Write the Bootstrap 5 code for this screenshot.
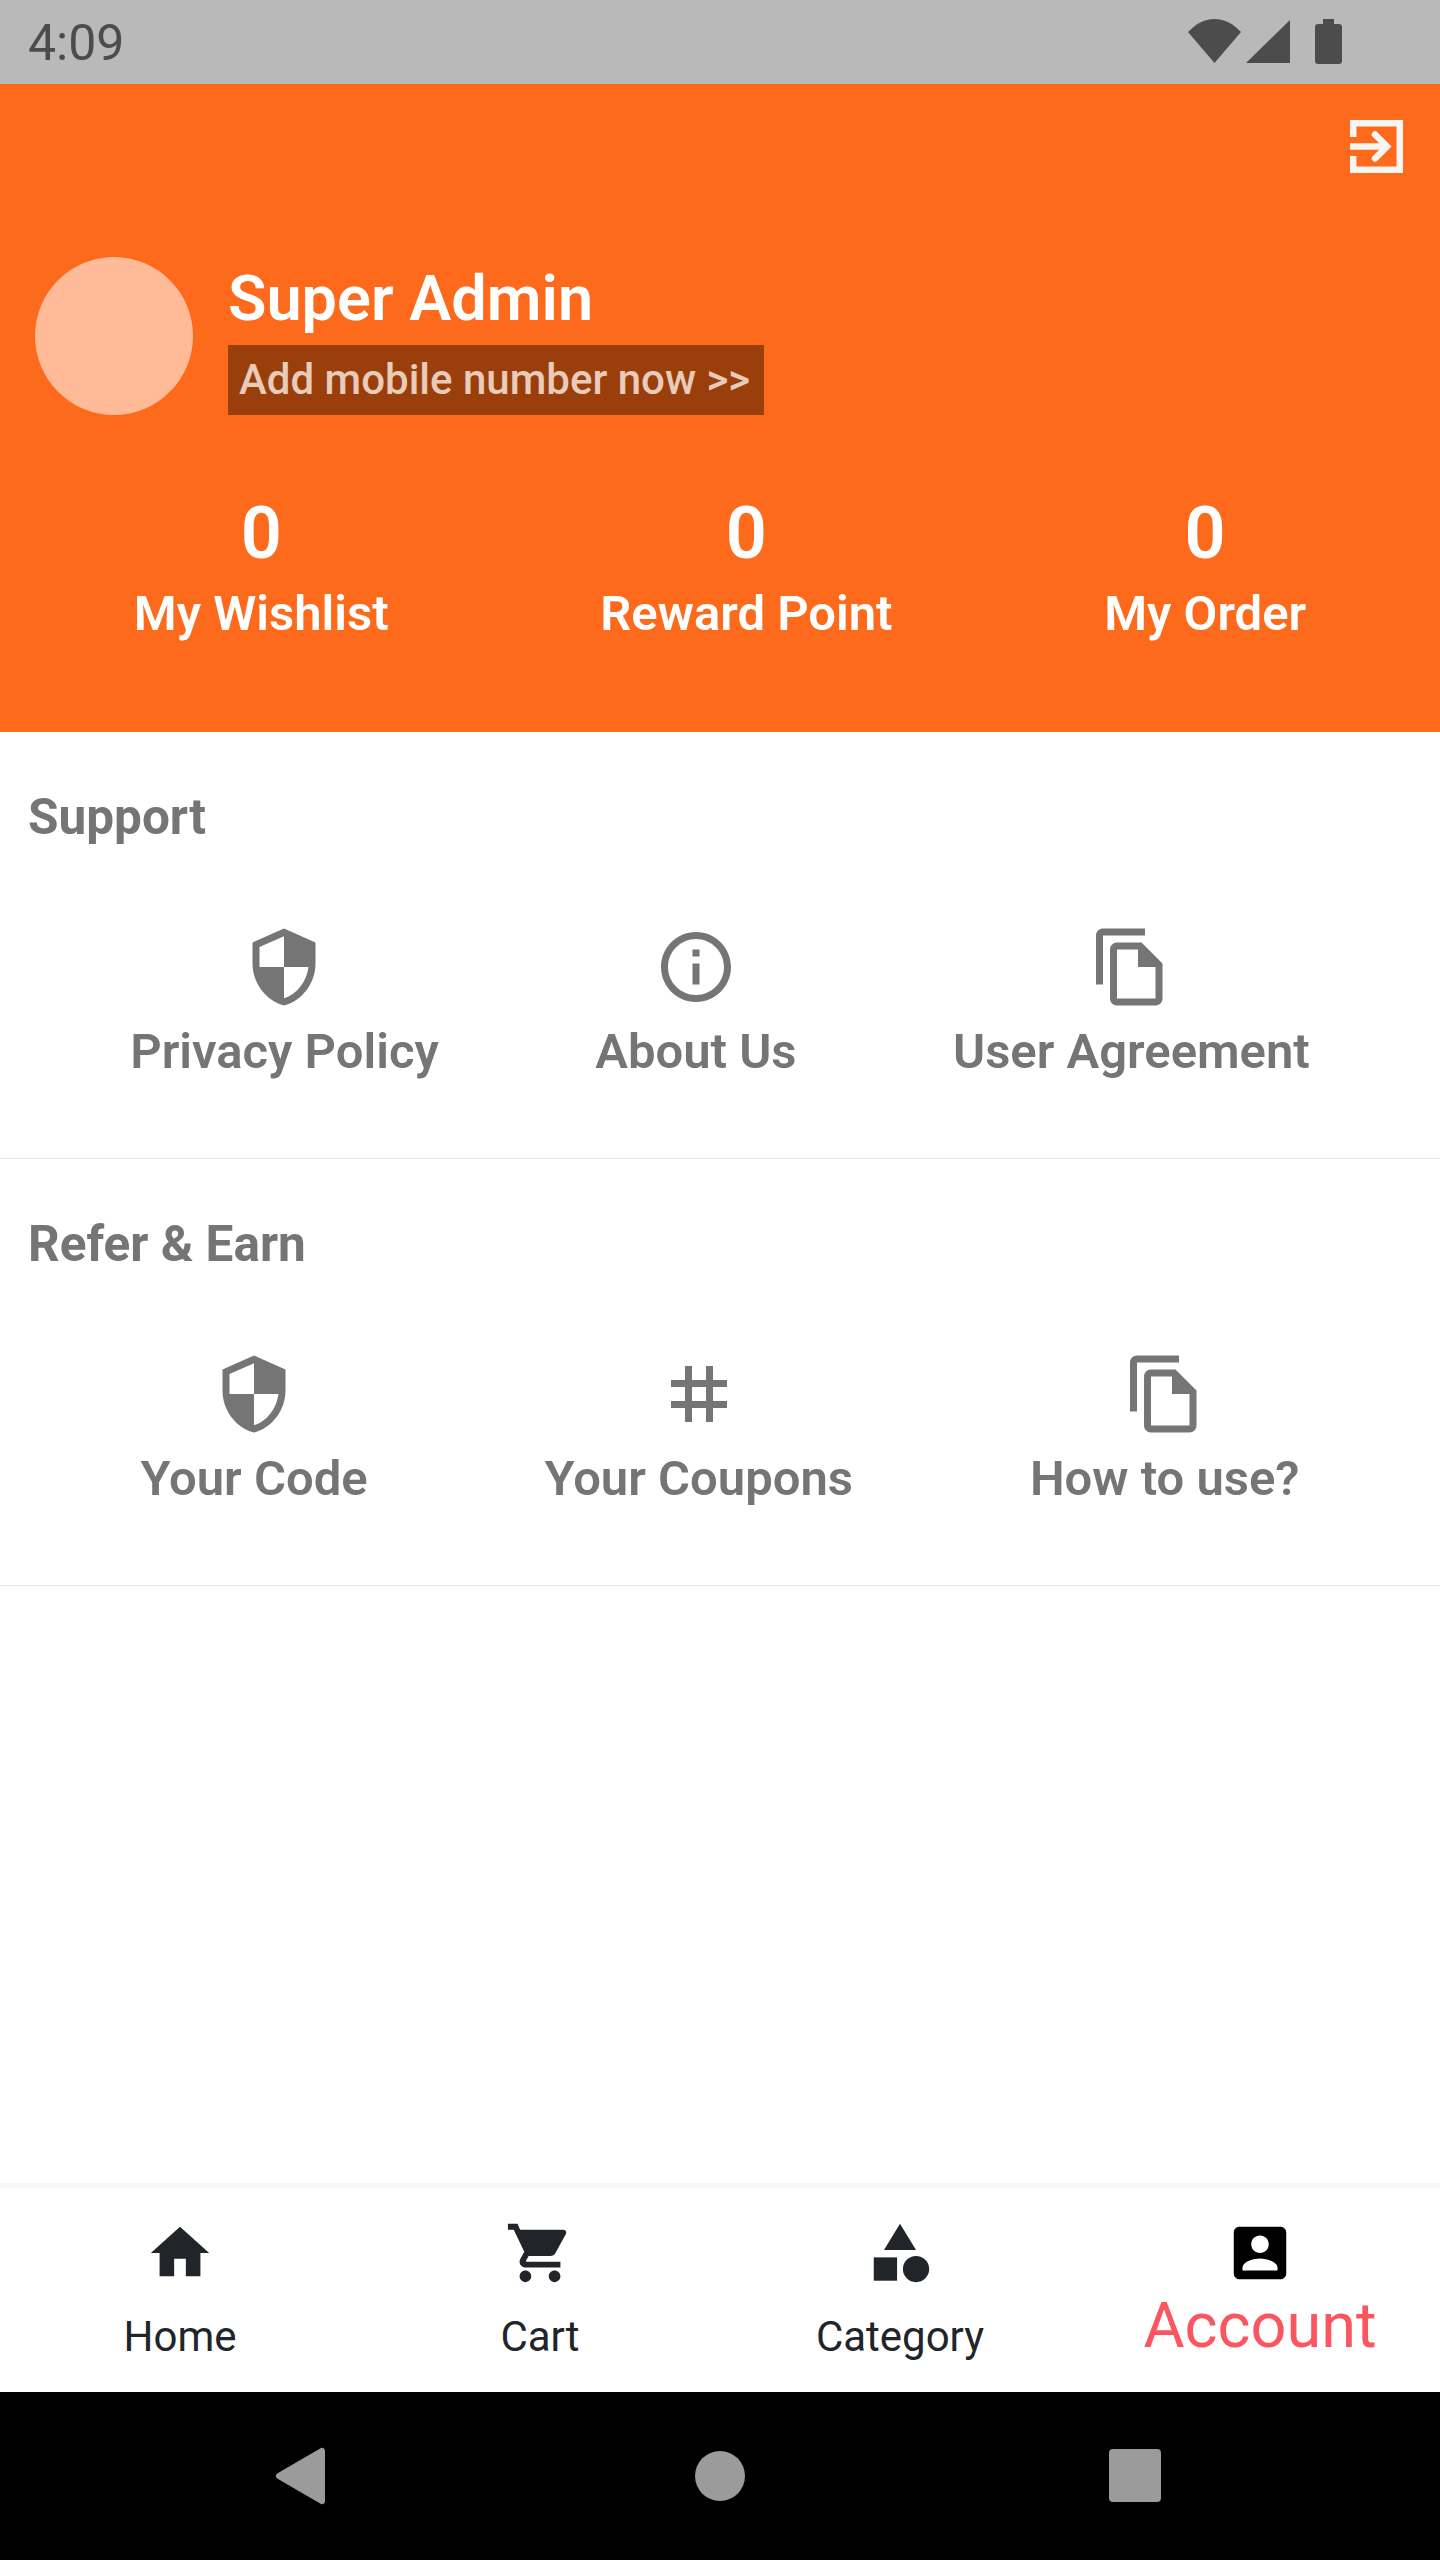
<!DOCTYPE html>
<html lang="en">
<head>
    <meta charset="UTF-8">
    <meta name="viewport" content="width=device-width, initial-scale=1.0">
    <title>Account</title>
    <link href="https://cdn.jsdelivr.net/npm/bootstrap@5.3.2/dist/css/bootstrap.min.css" rel="stylesheet">
    <style>
        body {
            font-family: Roboto, "Liberation Sans", sans-serif;
            background-color: #fff;
        }
        .app-screen {
            width: 1440px;
            height: 2560px;
        }
        .status-strip {
            height: 84px;
            background-color: #b9b9b9;
            color: #4c4c4c;
            padding: 0 98px 0 28px;
        }
        .status-time {
            font-size: 50px;
            line-height: 84px;
            padding-top: 2px;
        }
        .profile-head {
            height: 648px;
            background-color: #fd6a1b;
            color: #fff;
            padding-top: 36px;
        }
        .exit-row {
            padding-right: 37px;
            margin-bottom: 84px;
        }
        .exit-row svg {
            display: block;
        }
        .user-row {
            padding-left: 35px;
            gap: 35px;
        }
        .user-photo {
            width: 158px;
            height: 158px;
            background-color: #ffba98;
        }
        .user-name {
            font-size: 63px;
            font-weight: 600;
            line-height: 70px;
            margin-bottom: 11px;
        }
        .mobile-link {
            height: 70px;
            width: 536px;
            padding-left: 11px;
            background-color: #9a3f0c;
            color: #e9cbb9;
            font-size: 42px;
            font-weight: 500;
            line-height: 70px;
        }
        .stat-row {
            margin-top: 79px;
            padding: 0 28px;
        }
        .stat-num {
            font-size: 72px;
            font-weight: 600;
            line-height: 80px;
        }
        .stat-label {
            font-size: 49px;
            font-weight: 600;
            line-height: 80px;
        }
        .menu-block {
            height: 427px;
            padding-top: 55px;
            border-bottom: 1px solid #ebe8dc;
            color: #757575;
        }
        .menu-title {
            font-size: 49.500px;
            font-weight: 700;
            line-height: 60px;
            padding-left: 28px;
            margin-bottom: 78px;
        }
        .menu-items {
            padding: 0 52px;
        }
        .menu-items svg {
            display: block;
            width: 84px;
            height: 84px;
            fill: #757575;
            margin-bottom: 11px;
        }
        .menu-label {
            font-size: 49px;
            font-weight: 600;
            line-height: 64px;
        }
        .tab-strip {
            height: 209px;
            border-top: 5px solid #f7f7f7;
            color: #212529;
        }
        .tab-cell {
            width: 360px;
            padding-top: 30px;
        }
        .tab-cell svg {
            display: block;
            width: 70px;
            height: 70px;
            fill: #212529;
        }
        .tab-label {
            font-size: 42px;
            line-height: 56px;
            margin-top: 21px;
        }
        .tab-label-on {
            font-size: 63px;
            line-height: 70px;
            margin-top: 3px;
            color: #fb5560;
        }
        .system-nav {
            height: 168px;
            background-color: #000;
        }
    </style>
</head>
<body>

<div class="app-screen d-flex flex-column">

    <div class="status-strip d-flex justify-content-between align-items-center">
        <span class="status-time">4:09</span>
        <svg width="154" height="46" viewBox="0 0 154 46" fill="#4c4c4c">
            <path d="M0 13C8 5 16 0 26.500 0S45 5 53 13L26.500 44Z"/>
            <path d="M58 44L102 1V44Z"/>
            <path d="M135 0H146V5H151C153 5 154 6 154 8V42C154 44 153 45 151 45H130C128 45 127 44 127 42V8C127 6 128 5 130 5H135Z"/>
        </svg>
    </div>

    <div class="profile-head">
        <div class="exit-row d-flex justify-content-end">
            <svg width="53" height="53" viewBox="0 0 53 53" fill="none" stroke="#f7f5f2" stroke-width="6.500">
                <path d="M3.200 17V3.200H49.800V49.800H3.200V36"/>
                <path d="M0 26.500H36"/>
                <path d="M25 14.500L37 26.500L25 38.500" stroke-linecap="round"/>
            </svg>
        </div>
        <div class="user-row d-flex align-items-end">
            <div class="user-photo rounded-circle"></div>
            <div>
                <div class="user-name">Super Admin</div>
                <div class="mobile-link">Add mobile number now &gt;&gt;</div>
            </div>
        </div>
        <div class="stat-row d-flex justify-content-around text-center">
            <div>
                <div class="stat-num">0</div>
                <div class="stat-label">My Wishlist</div>
            </div>
            <div>
                <div class="stat-num">0</div>
                <div class="stat-label">Reward Point</div>
            </div>
            <div>
                <div class="stat-num">0</div>
                <div class="stat-label">My Order</div>
            </div>
        </div>
    </div>

    <div class="menu-block">
        <div class="menu-title">Support</div>
        <div class="menu-items d-flex justify-content-around text-center">
            <div class="d-flex flex-column align-items-center">
                <svg viewBox="0 0 24 24"><path d="M12 1L3 5v6c0 5.550 3.840 10.740 9 12 5.160-1.260 9-6.450 9-12V5l-9-4zm0 10.990h7c-.53 4.120-3.280 7.790-7 8.940V12H5V6.300l7-3.110v8.800z"/></svg>
                <div class="menu-label">Privacy Policy</div>
            </div>
            <div class="d-flex flex-column align-items-center">
                <svg viewBox="0 0 24 24"><path d="M11 7h2v2h-2zm0 4h2v6h-2zm1-9C6.480 2 2 6.480 2 12s4.480 10 10 10 10-4.480 10-10S17.520 2 12 2zm0 18c-4.410 0-8-3.590-8-8s3.590-8 8-8 8 3.590 8 8-3.590 8-8 8z"/></svg>
                <div class="menu-label">About Us</div>
            </div>
            <div class="d-flex flex-column align-items-center">
                <svg viewBox="0 0 24 24"><path d="M16 1H4c-1.100 0-2 .9-2 2v14h2V3h12V1zm-1 4H8c-1.100 0-1.990.9-1.990 2L6 21c0 1.100.89 2 1.990 2H19c1.100 0 2-.9 2-2V11l-6-6zM8 21V7h6v5h5v9H8z"/></svg>
                <div class="menu-label">User Agreement</div>
            </div>
        </div>
    </div>

    <div class="menu-block">
        <div class="menu-title">Refer &amp; Earn</div>
        <div class="menu-items d-flex justify-content-around text-center">
            <div class="d-flex flex-column align-items-center">
                <svg viewBox="0 0 24 24"><path d="M12 1L3 5v6c0 5.550 3.840 10.740 9 12 5.160-1.260 9-6.450 9-12V5l-9-4zm0 10.990h7c-.53 4.120-3.280 7.790-7 8.940V12H5V6.300l7-3.110v8.800z"/></svg>
                <div class="menu-label">Your Code</div>
            </div>
            <div class="d-flex flex-column align-items-center">
                <svg viewBox="0 0 24 24"><path d="M20 10V8h-4V4h-2v4h-4V4H8v4H4v2h4v4H4v2h4v4h2v-4h4v4h2v-4h4v-2h-4v-4h4zm-6 4h-4v-4h4v4z"/></svg>
                <div class="menu-label">Your Coupons</div>
            </div>
            <div class="d-flex flex-column align-items-center">
                <svg viewBox="0 0 24 24"><path d="M16 1H4c-1.100 0-2 .9-2 2v14h2V3h12V1zm-1 4H8c-1.100 0-1.990.9-1.990 2L6 21c0 1.100.89 2 1.990 2H19c1.100 0 2-.9 2-2V11l-6-6zM8 21V7h6v5h5v9H8z"/></svg>
                <div class="menu-label">How to use?</div>
            </div>
        </div>
    </div>

    <div class="flex-grow-1"></div>

    <div class="tab-strip d-flex">
        <div class="tab-cell d-flex flex-column align-items-center">
            <svg viewBox="0 0 24 24"><path d="M10 20v-6h4v6h5v-8h3L12 3 2 12h3v8z"/></svg>
            <div class="tab-label">Home</div>
        </div>
        <div class="tab-cell d-flex flex-column align-items-center">
            <svg viewBox="0 0 24 24"><path d="M7 18c-1.100 0-1.990.9-1.990 2S5.900 22 7 22s2-.9 2-2-.9-2-2-2zM1 2v2h2l3.600 7.590-1.350 2.450c-.16.28-.25.61-.25.96 0 1.100.9 2 2 2h12v-2H7.420c-.14 0-.25-.11-.25-.25l.03-.12.9-1.630h7.450c.75 0 1.410-.41 1.750-1.030l3.580-6.490c.08-.14.12-.31.12-.48 0-.55-.45-1-1-1H5.210l-.94-2H1zm16 16c-1.100 0-1.990.9-1.990 2s.89 2 1.990 2 2-.9 2-2-.9-2-2-2z"/></svg>
            <div class="tab-label">Cart</div>
        </div>
        <div class="tab-cell d-flex flex-column align-items-center">
            <svg viewBox="0 0 24 24"><path d="M12 2l-5.500 9h11z"/><circle cx="17.500" cy="17.500" r="4.500"/><path d="M3 13.500h8v8H3z"/></svg>
            <div class="tab-label">Category</div>
        </div>
        <div class="tab-cell d-flex flex-column align-items-center">
            <svg viewBox="0 0 24 24"><path d="M3 5v14c0 1.100.89 2 2 2h14c1.100 0 2-.9 2-2V5c0-1.100-.9-2-2-2H5c-1.110 0-2 .9-2 2zm12 4c0 1.660-1.340 3-3 3s-3-1.340-3-3 1.340-3 3-3 3 1.340 3 3zm-9 8c0-2 4-3.100 6-3.100s6 1.100 6 3.100v1H6v-1z" fill="#000"/></svg>
            <div class="tab-label-on">Account</div>
        </div>
    </div>

    <div class="system-nav">
        <svg width="1440" height="168" viewBox="0 0 1440 168" fill="#9b9b9b">
            <path d="M321 56C323 55 325 57 325 59V109C325 111 323 113 321 112L278 87C275 85 275 83 278 81Z"/>
            <circle cx="720" cy="84" r="25"/>
            <rect x="1109" y="57" width="52" height="53" rx="4"/>
        </svg>
    </div>

</div>

<script src="https://cdn.jsdelivr.net/npm/bootstrap@5.3.2/dist/js/bootstrap.bundle.min.js"></script>
</body>
</html>
